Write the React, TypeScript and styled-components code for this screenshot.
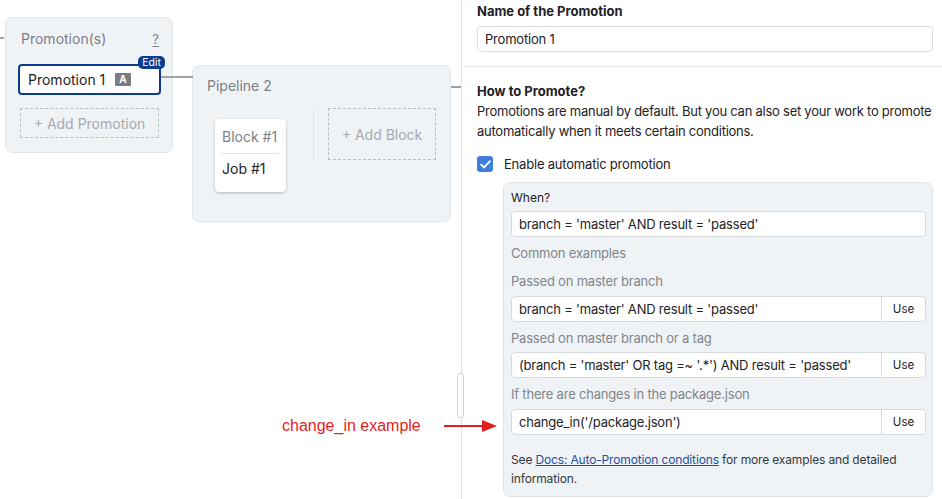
import React from "react";
import styled, { createGlobalStyle } from "styled-components";

const Global = createGlobalStyle`
  html, body { margin: 0; padding: 0; background: #fff; }
  body { font-family: Inter, "Noto Sans", sans-serif; color: #1e2225; }
  * { box-sizing: border-box; }
`;

const Page = styled.div`
  display: flex;
  width: 942px;
  height: 499px;
  overflow: hidden;
  position: relative;
`;

const Canvas = styled.div`
  position: relative;
  width: 461px;
  flex: none;
  height: 100%;
  display: flex;
  align-items: flex-start;
  padding: 17px 0 0 5px;
`;

const NodeBox = styled.div<{ $w: number; $h: number; $mt?: number; $ml?: number }>`
  width: ${(p) => p.$w}px;
  height: ${(p) => p.$h}px;
  margin-top: ${(p) => p.$mt || 0}px;
  margin-left: ${(p) => p.$ml || 0}px;
  background: #f0f3f5;
  border: 1px solid #e3e7ea;
  border-radius: 7px;
  flex: none;
`;

const PromoInner = styled.div`
  padding: 11px 12px 0 12px;
  display: flex;
  flex-direction: column;
`;

const NodeTitle = styled.div`
  display: flex;
  justify-content: space-between;
  align-items: center;
  font-size: 14px;
  line-height: 20px;
  color: #7b8186;
  padding-left: 3px;
  padding-right: 1px;
`;

const Help = styled.span`
  font-size: 13px;
  color: #7b8186;
  text-decoration: underline;
  text-underline-offset: 2px;
`;

const PromoCard = styled.div`
  position: relative;
  margin-top: 15px;
  width: 143px;
  height: 31px;
  border: 2px solid #0b3c8f;
  border-radius: 4px;
  background: #fff;
  display: flex;
  align-items: center;
  padding-left: 8px;
  font-size: 14px;
  color: #1e2225;
`;

const Badge = styled.span`
  margin-left: 10px;
  background: #7a7e82;
  color: #fff;
  font-size: 10px;
  font-weight: 700;
  line-height: 13px;
  padding: 0 4px;
  border-radius: 1px;
`;

const EditTag = styled.span`
  position: absolute;
  top: -10px;
  right: -6px;
  background: #0b3c8f;
  color: #fff;
  font-size: 10.5px;
  line-height: 13px;
  padding: 0 4px;
  border-radius: 5px;
`;

const AddWrap = styled.div`
  margin-top: 13px;
  margin-left: 2px;
`;

const DashedAdd = styled.div<{ $w: number; $h: number }>`
  width: ${(p) => p.$w}px;
  height: ${(p) => p.$h}px;
  border: 1px dashed #b9bec2;
  display: flex;
  align-items: center;
  justify-content: center;
  font-size: 14px;
  color: #a5abb0;
  flex: none;
`;

const PipeInner = styled.div`
  padding: 10px 14px 0 11px;
`;

const PipeRow = styled.div`
  display: flex;
  align-items: flex-start;
  margin-top: 12px;
  padding-left: 3px;
`;

const BlockCard = styled.div`
  margin-top: 11px;
  margin-left: 8px;
  width: 71px;
  height: 73px;
  background: #fff;
  border-radius: 4px;
  box-shadow: 0 1px 3px rgba(0, 0, 0, 0.25);
  padding: 0 7px;
  font-size: 14px;
`;

const BlockName = styled.div`
  color: #7b8186;
  height: 35px;
  display: flex;
  align-items: center;
  border-bottom: 1px solid #e1e4e6;
`;

const JobName = styled.div`
  height: 28px;
  display: flex;
  align-items: center;
  color: #1e2225;
`;

const VSep = styled.div`
  width: 1px;
  height: 50px;
  background: #dde1e4;
  margin: 2px 14px 0 27px;
`;

const Line = styled.div<{ $x: number; $y: number; $w: number; $dashed?: boolean }>`
  position: absolute;
  left: ${(p) => p.$x}px;
  top: ${(p) => p.$y}px;
  width: ${(p) => p.$w}px;
  height: 0;
  border-top: 2px ${(p) => (p.$dashed ? "dashed" : "solid")} #9ea3a7;
`;

const Handle = styled.div`
  position: absolute;
  left: 457px;
  top: 373px;
  width: 7px;
  height: 45px;
  border: 1px solid #cfd3d6;
  border-radius: 3px;
  background: #fff;
  z-index: 2;
`;

const Panel = styled.div`
  flex: 1;
  border-left: 1px solid #dcdfe2;
  display: flex;
  flex-direction: column;
  letter-spacing: -0.2px;
`;

const Section = styled.div<{ $border?: boolean }>`
  padding: ${(p) => (p.$border ? "1px 9px 14px 15px" : "14px 9px 0 15px")};
  border-bottom: ${(p) => (p.$border ? "1px solid #e3e6e8" : "none")};
`;

const Heading = styled.div`
  font-size: 13px;
  font-weight: 700;
  line-height: 20px;
  letter-spacing: 0;
  color: #1e2225;
`;

const TextInput = styled.div`
  margin-top: 5px;
  height: 26px;
  border: 1px solid #d9dde0;
  border-radius: 4px;
  display: flex;
  align-items: center;
  padding-left: 7px;
  font-size: 13px;
  background: #fff;
`;

const Para = styled.div`
  font-size: 13px;
  line-height: 20px;
  letter-spacing: -0.25px;
  margin-right: -8px;
  color: #1e2225;
`;

const CheckRow = styled.label`
  display: flex;
  align-items: center;
  height: 16px;
  margin-top: 15px;
  font-size: 13px;
  gap: 11px;
`;

const Check = styled.span`
  width: 16px;
  height: 16px;
  border-radius: 3px;
  background: #3d7fdb;
  display: inline-flex;
  align-items: center;
  justify-content: center;
`;

const Conditions = styled.div`
  margin: 10px 0 0 26px;
  background: #f0f3f5;
  border: 1px solid #e0e4e7;
  border-radius: 7px;
  padding: 6px 6px 8px 7px;
`;

const SmallLabel = styled.div<{ $muted?: boolean; $mt?: number }>`
  font-size: ${(p) => (p.$muted ? 13 : 12)}px;
  line-height: 18px;
  letter-spacing: ${(p) => (p.$muted ? "-0.2px" : "0")};
  color: ${(p) => (p.$muted ? "#80868b" : "#1e2225")};
  margin-top: ${(p) => p.$mt || 0}px;
`;

const Field = styled.div<{ $mt?: number }>`
  margin-top: ${(p) => p.$mt || 0}px;
  height: 26px;
  display: flex;
  border: 1px solid #d6dadd;
  border-radius: 4px;
  background: #fff;
  font-size: 13px;
  overflow: hidden;
`;

const FieldText = styled.div`
  flex: 1;
  display: flex;
  align-items: center;
  padding-left: 7px;
  color: #1e2225;
`;

const UseBtn = styled.div`
  width: 44px;
  border-left: 1px solid #d6dadd;
  display: flex;
  align-items: center;
  justify-content: center;
  font-size: 11.5px;
  letter-spacing: 0;
  color: #1e2225;
`;

const Note = styled.div`
  margin-top: 15px;
  font-size: 12px;
  line-height: 19px;
  letter-spacing: -0.15px;
  color: #33383c;
`;

const DocLink = styled.a`
  color: #1d4fa8;
  text-decoration: underline;
`;

const Annotation = styled.div`
  position: absolute;
  left: 282px;
  top: 417px;
  display: flex;
  align-items: center;
  gap: 23px;
  font-family: "Liberation Sans", Arial, sans-serif;
  font-size: 16px;
  color: #e41d1d;
  z-index: 3;
`;

const examples = [
  { label: "Passed on master branch", value: "branch = 'master' AND result = 'passed'" },
  { label: "Passed on master branch or a tag", value: "(branch = 'master' OR tag =~ '.*') AND result = 'passed'" },
  { label: "If there are changes in the package.json", value: "change_in('/package.json')" },
];

export default function App() {
  return (
    <>
      <Global />
      <Page>
        <Canvas>
          <Line $x={0} $y={37} $w={4} />
          <NodeBox $w={168} $h={136}>
            <PromoInner>
              <NodeTitle>
                <span>Promotion(s)</span>
                <Help>?</Help>
              </NodeTitle>
              <PromoCard>
                Promotion 1<Badge>A</Badge>
                <EditTag>Edit</EditTag>
              </PromoCard>
              <AddWrap>
                <DashedAdd $w={139} $h={30}>+ Add Promotion</DashedAdd>
              </AddWrap>
            </PromoInner>
          </NodeBox>
          <Line $x={161} $y={76} $w={32} />
          <NodeBox $w={259} $h={157} $mt={48} $ml={19}>
            <PipeInner>
              <NodeTitle>Pipeline 2</NodeTitle>
              <PipeRow>
                <BlockCard>
                  <BlockName>Block #1</BlockName>
                  <JobName>Job #1</JobName>
                </BlockCard>
                <VSep />
                <DashedAdd $w={108} $h={52}>+ Add Block</DashedAdd>
              </PipeRow>
            </PipeInner>
          </NodeBox>
          <Line $x={451} $y={86} $w={10} $dashed />
        </Canvas>
        <Handle />
        <Panel>
          <Section $border>
            <Heading>Name of the Promotion</Heading>
            <TextInput>Promotion 1</TextInput>
          </Section>
          <Section>
            <Heading>How to Promote?</Heading>
            <Para>
              Promotions are manual by default. But you can also set your work to promote
              automatically when it meets certain conditions.
            </Para>
            <CheckRow>
              <Check>
                <svg width="11" height="9" viewBox="0 0 11 9">
                  <path d="M1.2 4.6 L4.1 7.4 L9.8 1.4" fill="none" stroke="#fff" strokeWidth="2" strokeLinecap="round" strokeLinejoin="round" />
                </svg>
              </Check>
              Enable automatic promotion
            </CheckRow>
            <Conditions>
              <SmallLabel>When?</SmallLabel>
              <Field $mt={4}>
                <FieldText>branch = 'master' AND result = 'passed'</FieldText>
              </Field>
              <SmallLabel $muted $mt={7}>Common examples</SmallLabel>
              {examples.map((e, i) => (
                <React.Fragment key={e.label}>
                  <SmallLabel $muted $mt={i === 0 ? 10 : 7}>{e.label}</SmallLabel>
                  <Field $mt={5.5}>
                    <FieldText>{e.value}</FieldText>
                    <UseBtn>Use</UseBtn>
                  </Field>
                </React.Fragment>
              ))}
              <Note>
                See <DocLink href="#">Docs: Auto-Promotion conditions</DocLink> for more examples and detailed
                information.
              </Note>
            </Conditions>
          </Section>
        </Panel>
        <Annotation>
          <span>change_in example</span>
          <svg width="54" height="14" viewBox="0 0 54 14">
            <line x1="0" y1="7" x2="40" y2="7" stroke="#e41d1d" strokeWidth="2" />
            <path d="M38 1 L53 7 L38 13 Z" fill="#e41d1d" />
          </svg>
        </Annotation>
      </Page>
    </>
  );
}
